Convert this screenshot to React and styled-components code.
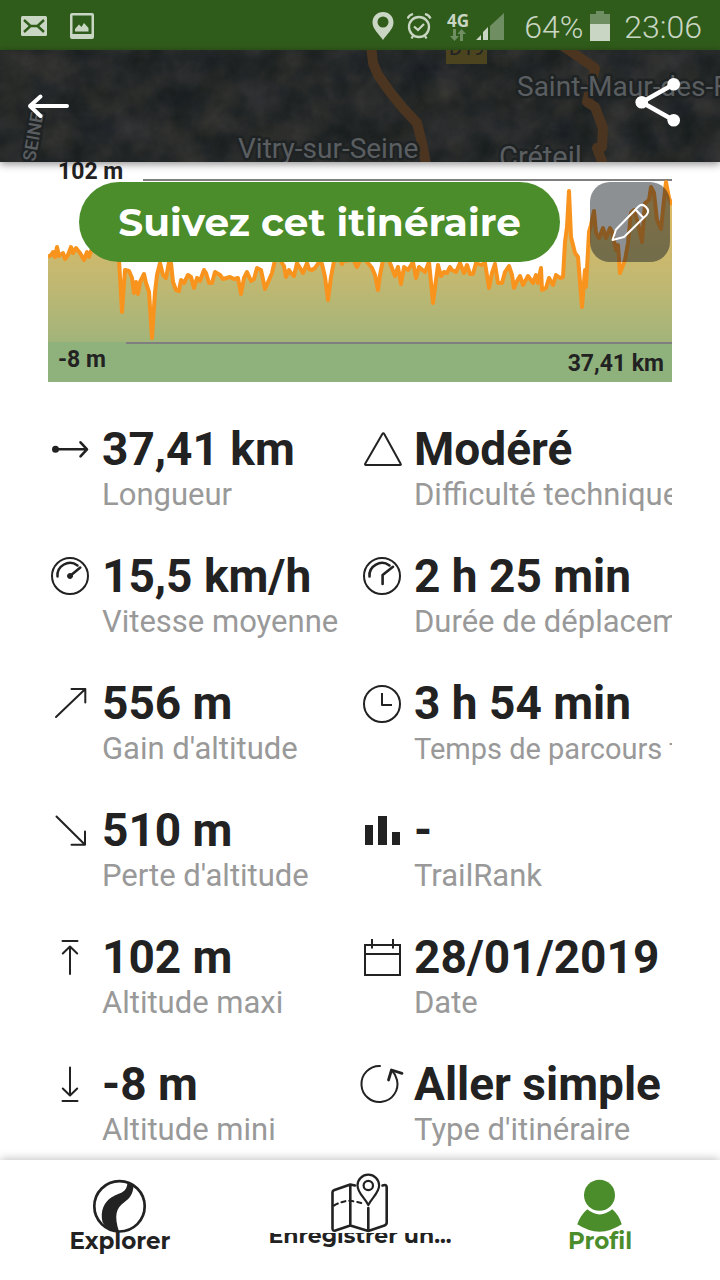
import React from "react";
import styled, { createGlobalStyle } from "styled-components";

const GlobalStyle = createGlobalStyle`
  * {
    box-sizing: border-box;
  }
  body {
    margin: 0;
    background: #fff;
    color: #222;
    font-family: Roboto, "Liberation Sans", sans-serif;
  }
  button {
    margin: 0;
    padding: 0;
    border: 0;
    background: none;
    color: inherit;
    cursor: pointer;
  }
`;

const Page = styled.div`
  display: flex;
  flex-direction: column;
  min-height: 100vh;
`;

const StatusBar = styled.div`
  display: flex;
  align-items: center;
  justify-content: space-between;
  height: 50px;
  padding: 3px 18px 0 20px;
  background: #305c1b;
  color: #c9d6c3;
`;

const StatusGroup = styled.div`
  display: flex;
  align-items: center;
  gap: ${({ $gap }) => $gap}px;
`;

const StatusText = styled.span`
  font-size: 32px;
  line-height: 36px;
  font-weight: 300;
`;

const Network = styled.span`
  display: flex;
  flex-direction: column;
  align-items: center;
  font: 700 17px/16px "Open Sans", sans-serif;
`;

const Header = styled.header`
  position: relative;
  z-index: 2;
  display: flex;
  align-items: center;
  justify-content: space-between;
  height: 112px;
  padding: 0 38px 0 24px;
  background: #272b2b;
  box-shadow: 0 2px 8px rgba(0, 0, 0, 0.45);
`;

const MapBackdrop = styled.svg`
  position: absolute;
  top: 0;
  left: 0;
  width: 100%;
  height: 100%;
  text {
    fill: #5a5e61;
    stroke: #1e2223;
    stroke-width: 5px;
    stroke-linejoin: round;
    paint-order: stroke;
  }
`;

const HeaderButton = styled.button`
  position: relative;
  width: 48px;
  height: 48px;
  color: #fff;
  svg {
    display: block;
    overflow: visible;
  }
`;

const Main = styled.main`
  flex: 1;
  padding: 0 48px 11px;
`;

const Chart = styled.section`
  position: relative;
  height: 220px;
`;

const ChartSvg = styled.svg`
  display: block;
  width: 100%;
  height: 100%;
`;

const ChartLabel = styled.span`
  position: absolute;
  ${({ $place }) => $place};
  font-size: 23px;
  line-height: 26px;
  font-weight: 700;
`;

const ChartActions = styled.div`
  position: absolute;
  top: 20px;
  left: 31px;
  right: 2px;
  display: flex;
  gap: 30px;
`;

const FollowButton = styled.button`
  flex: 1;
  height: 80px;
  border-radius: 40px;
  background: #4b8c2b;
  color: #fff;
  font: 700 39px/48px Montserrat, Inter, sans-serif;
`;

const EditButton = styled.button`
  width: 80px;
  height: 80px;
  border-radius: 20px;
  background: rgba(27, 33, 39, 0.5);
  color: #fff;
  svg {
    display: block;
  }
`;

const Stats = styled.dl`
  display: grid;
  grid-template-columns: 1fr 1fr;
  row-gap: 35px;
  margin: 0;
  padding-top: 40px;
`;

const Stat = styled.div`
  display: grid;
  grid-template-columns: 44px 1fr;
  column-gap: 10px;
  min-width: 0;
  overflow: hidden;
`;

const StatIcon = styled.svg`
  grid-row: 1;
  grid-column: 1;
  align-self: center;
  width: 44px;
  height: 44px;
  fill: none;
  stroke: #222;
  stroke-width: 2;
  stroke-linecap: round;
  stroke-linejoin: round;
`;

const StatValue = styled.dd`
  grid-row: 1;
  grid-column: 2;
  margin: 0;
  font-size: 46px;
  line-height: 54px;
  font-weight: 700;
  white-space: nowrap;
`;

const StatLabel = styled.dt`
  grid-row: 2;
  grid-column: 2;
  color: #999;
  font-size: ${({ $small }) => ($small ? 29 : 31)}px;
  line-height: ${({ $small }) => ($small ? 34 : 38)}px;
  white-space: nowrap;
`;

const BottomNav = styled.nav`
  position: relative;
  z-index: 2;
  display: grid;
  grid-template-columns: repeat(3, 1fr);
  height: 120px;
  background: #fff;
  box-shadow: 0 0 10px rgba(0, 0, 0, 0.3);
`;

const NavItem = styled.a`
  display: flex;
  flex-direction: column;
  align-items: center;
  padding-top: 13px;
  color: ${({ $active }) => ($active ? "#4b8c2b" : "#222")};
  text-decoration: none;
  svg {
    flex: none;
  }
`;

const NavLabel = styled.span`
  overflow: ${({ $tight }) => ($tight ? "hidden" : "visible")};
  padding-bottom: 12px;
  font: 700 ${({ $tight }) => ($tight ? 22 : 23)}px Montserrat, Inter, sans-serif;
  line-height: ${({ $tight }) => ($tight ? 6 : 16)}px;
  white-space: nowrap;
`;

const elevation = `0,95 3,93 5,90 7,95 9,85 11,94 15,91 17,97 20,93 23,85 25,91 28,86 32,91 36,98
39,90 41,95 43,89 50,84 58,88 66,82 71,98 74,150 77,108 81,109 84,116 86,131 88,120 90,132 92,120
96,112 98,121 101,130 104,176 107,130 109,113 112,101 115,113 118,116 121,100 123,101 125,120
128,128 131,129 133,118 136,121 140,113 143,115 146,126 149,116 152,119 156,108 158,111 161,121
164,121 167,110 172,113 175,117 182,115 186,117 190,116 193,132 196,116 199,110 203,119 206,117
209,106 213,108 217,127 221,118 224,111 227,98 230,92 234,101 236,104 238,115 241,108 243,111
246,114 249,101 252,106 255,111 259,101 261,107 264,108 267,106 271,100 274,102 277,115 280,138
283,115 286,99 290,92 294,102 297,94 299,99 304,95 309,105 314,94 320,101 324,106 327,113 330,128
332,113 335,98 339,92 342,101 347,114 350,105 353,122 356,105 360,108 365,100 368,116 371,105
377,110 381,100 385,141 388,118 390,103 393,114 396,110 399,111 402,105 404,108 408,110 412,101
416,111 419,103 422,112 425,112 428,101 433,103 437,101 441,126 444,111 447,102 450,121 454,121
457,110 461,104 464,113 466,126 469,119 472,114 475,123 480,114 485,121 488,113 490,121 493,106
494,128 498,126 501,116 505,123 508,113 512,116 515,115 517,80 519,65 521,29 523,75 527,91 530,95
534,145 537,108 538,125 541,70 543,63 546,49 548,71 551,76 555,66 558,76 562,66 564,70 568,88
570,83 572,111 577,98 580,81 583,51 586,48 590,61 594,80 597,41 601,38 603,25 606,31 609,58
613,67 616,38 618,20 621,36 624,43`;

const icons = {
  length: (
    <g strokeWidth="2.6">
      <circle cx="7.5" cy="22.3" r="2.5" fill="#222" strokeWidth="2" />
      <path d="M8 22.3H38.5M32.5 15.3L39 22.3L32.5 29.3" />
    </g>
  ),
  difficulty: <path d="M22.2 7.2Q23.3 5.5 24.4 7.2L40.5 36.5Q41.5 38 40 38H6Q4.5 38 5.3 36.5Z" />,
  speed: (
    <g>
      <circle cx="22" cy="22" r="18" />
      <path strokeWidth="2.5" d="M9.5 22.5A12.5 12.5 0 0 1 29.5 11.5M22 22L32.3 13.5" />
      <circle cx="22" cy="22" r="2.5" fill="#222" strokeWidth="1" />
    </g>
  ),
  moving: (
    <g>
      <circle cx="22" cy="22" r="18" />
      <path strokeWidth="2.6" d="M9.5 22.5A12.5 12.5 0 0 1 29.5 11.5M22.6 30V21L33 12.8" />
    </g>
  ),
  gain: <path d="M8 36L37.3 8M23.5 8H37.3V21.5" />,
  time: (
    <g strokeLinecap="butt">
      <circle cx="22" cy="22" r="18" />
      <path d="M22 11V23H32" />
    </g>
  ),
  loss: <path d="M8.5 8.5L37 36.7M23.5 36.7H37V23.5" />,
  rank: <path fill="#222" stroke="none" d="M5 17h8v20H5zM18 8h9v29h-9zM32 24h8v13h-8z" />,
  max: <path d="M14.5 6H29.5M22 39V12M14.8 18.5L22 11.5L29.2 18.5" />,
  date: <path strokeLinecap="butt" strokeLinejoin="miter" d="M5 10H40V40H5ZM5 19H40M12 4V13.5M33 4V13.5" />,
  min: <path d="M22 5.5V33M14.8 26.5L22 33.5L29.2 26.5M14.5 39H29.5" />,
  type: (
    <g>
      <path d="M20 4A18 18 0 1 0 37 18Q35.5 12 31.5 8" />
      <path strokeWidth="2.8" d="M28.5 18L31.5 8L42 11.3" />
    </g>
  ),
};

const stats = [
  { icon: "length", value: "37,41 km", label: "Longueur" },
  { icon: "difficulty", value: "Modéré", label: "Difficulté technique" },
  { icon: "speed", value: "15,5 km/h", label: "Vitesse moyenne" },
  { icon: "moving", value: "2 h 25 min", label: "Durée de déplacement" },
  { icon: "gain", value: "556 m", label: "Gain d'altitude" },
  { icon: "time", value: "3 h 54 min", label: "Temps de parcours total", small: true },
  { icon: "loss", value: "510 m", label: "Perte d'altitude" },
  { icon: "rank", value: "-", label: "TrailRank" },
  { icon: "max", value: "102 m", label: "Altitude maxi" },
  { icon: "date", value: "28/01/2019", label: "Date" },
  { icon: "min", value: "-8 m", label: "Altitude mini" },
  { icon: "type", value: "Aller simple", label: "Type d'itinéraire" },
];

function SystemStatus() {
  return (
    <StatusBar>
      <StatusGroup $gap={22}>
        <svg width="28" height="28" viewBox="0 0 28 28">
          <rect x="1" y="3" width="26" height="20" rx="1.5" fill="#c9d6c3" />
          <path d="M4 7L10.5 13H17.5L24 7M4 19L10.5 13M24 19L17.5 13" fill="none" stroke="#305c1b" strokeWidth="2.4" />
        </svg>
        <svg width="24" height="28" viewBox="0 0 24 28">
          <path fillRule="evenodd" fill="#c9d6c3" d="M2 0H22Q24 0 24 2V24Q24 26 22 26H2Q0 26 0 24V2Q0 0 2 0ZM2.5 2.5V21H21.5V2.5Z" />
          <path fill="#c9d6c3" d="M5 18.5V16L9 11.5L11.5 14L14 10L18.5 15V18.5Z" />
        </svg>
      </StatusGroup>
      <StatusGroup $gap={14}>
        <StatusGroup $gap={13}>
          <svg width="22" height="30" viewBox="0 0 22 30">
            <path
              fillRule="evenodd"
              fill="#c9d6c3"
              d="M11 0C5 0 .5 4.5 .5 10.5C.5 17 7 22 11 28C15 22 21.5 17 21.5 10.5C21.5 4.5 17 0 11 0ZM11 4.5A5.5 5.5 0 1 1 11 15.5A5.5 5.5 0 1 1 11 4.5Z"
            />
          </svg>
          <svg width="26" height="28" viewBox="0 0 26 28" fill="none" stroke="#c9d6c3" strokeWidth="2.3">
            <circle cx="12" cy="14" r="10" />
            <path d="M.5 5.5Q2 2 6 1M23.5 5.5Q22 2 18 1M7 13.5L11 17L17 11M6 23L4.5 25.5M18 23L19.5 25.5" />
          </svg>
        </StatusGroup>
        <StatusGroup $gap={20}>
          <StatusGroup $gap={7}>
            <Network>
              4G
              <svg width="16" height="12" viewBox="0 0 16 12" fill="#6f8f62">
                <path d="M3 0H6V7H9L4.5 12L0 7H3ZM10 12V5H7.5L11.5 0L16 5H13V12Z" />
              </svg>
            </Network>
            <svg width="28" height="28" viewBox="0 0 28 28">
              <path fill="#c9d6c3" d="M0 27L5 22V27ZM7 27V19L12 14V27Z" />
              <path fill="#6f8f62" d="M14 27V13L28 0V27Z" />
            </svg>
          </StatusGroup>
          <StatusGroup $gap={7}>
            <StatusText>64%</StatusText>
            <svg width="20" height="32" viewBox="0 0 20 32">
              <path fill="#6f8f62" d="M6 0H14V3H20V13H0V3H6Z" />
              <path fill="#c9d6c3" d="M0 13H20V30H0Z" />
            </svg>
          </StatusGroup>
        </StatusGroup>
        <StatusText>23:06</StatusText>
      </StatusGroup>
    </StatusBar>
  );
}

function MapHeader() {
  return (
    <Header>
      <MapBackdrop viewBox="0 0 720 112" preserveAspectRatio="xMidYMid slice" aria-hidden="true">
        <defs>
          <filter id="terrain" x="0" y="0" width="100%" height="100%" colorInterpolationFilters="sRGB">
            <feTurbulence type="fractalNoise" baseFrequency="0.03" numOctaves="6" seed="8" />
            <feColorMatrix values="0.16 0.04 0 0 0.05  0.13 0.03 0 0 0.08  0.12 0 0.03 0 0.085  0 0 0 0 1" />
          </filter>
        </defs>
        <rect width="720" height="112" filter="url(#terrain)" />
        <g fill="none" stroke="#4b3520" strokeWidth="10" strokeLinejoin="round">
          <path d="M371 -4L373 13L378 25L390 42L403 58L417 73L422 93L426 114" />
          <path d="M560 -6L595 18L592 33L587 52L595 57L603 78L602 97L597 98L603 114" />
        </g>
        <rect x="446" y="-10" width="41" height="24" fill="#4c431f" />
        <text x="449" y="5" fontSize="20" style={{ fill: "#1e2223", stroke: "none" }}>D19</text>
        <text x="238" y="108" fontSize="28">Vitry-sur-Seine</text>
        <text x="517" y="46" fontSize="28">Saint-Maur-des-Fossés</text>
        <text x="499" y="117" fontSize="29">Créteil</text>
        <text x="34" y="118" fontSize="18" fontWeight="500" transform="rotate(-80 34 118)">-SEINE</text>
      </MapBackdrop>
      <HeaderButton type="button" aria-label="Retour">
        <svg width="48" height="48" viewBox="0 0 48 48" fill="none" stroke="currentColor" strokeWidth="4" strokeLinecap="round" strokeLinejoin="round">
          <path d="M6 24H43M16.5 14.5L6 24L16.5 34" />
        </svg>
      </HeaderButton>
      <HeaderButton type="button" aria-label="Partager">
        <svg width="48" height="48" viewBox="0 0 48 48" fill="currentColor" stroke="currentColor">
          <path fill="none" strokeWidth="4.5" d="M39.7 2.3L7.7 20.3L39.7 38.3" />
          <circle cx="7.7" cy="20.3" r="6.3" stroke="none" />
          <circle cx="39.7" cy="2.3" r="6.3" stroke="none" />
          <circle cx="39.7" cy="38.3" r="6.3" stroke="none" />
        </svg>
      </HeaderButton>
    </Header>
  );
}

function ElevationChart() {
  return (
    <Chart>
      <ChartSvg viewBox="0 0 624 220" preserveAspectRatio="none" aria-hidden="true">
        <defs>
          <linearGradient id="ground" gradientUnits="userSpaceOnUse" x1="0" y1="18" x2="0" y2="184">
            <stop offset="0" stopColor="#e8bb62" />
            <stop offset="0.6" stopColor="#c2b871" />
            <stop offset="1" stopColor="#a0b47b" />
          </linearGradient>
        </defs>
        <polygon points={`0,180 ${elevation} 624,180`} fill="url(#ground)" />
        <rect y="180" width="624" height="40" fill="#8fb27d" />
        <path d="M95 18H624M78 181H624" stroke="#7f7f7f" strokeWidth="2" />
        <polyline points={elevation} fill="none" stroke="#f8931d" strokeWidth="4" strokeLinejoin="round" />
      </ChartSvg>
      <ChartLabel $place="top: -3px; left: 10px">102 m</ChartLabel>
      <ChartLabel $place="bottom: 9px; left: 10px">-8 m</ChartLabel>
      <ChartLabel $place="bottom: 5px; right: 8px">37,41 km</ChartLabel>
      <ChartActions>
        <FollowButton type="button">Suivez cet itinéraire</FollowButton>
        <EditButton type="button" aria-label="Modifier">
          <svg width="80" height="80" viewBox="0 0 80 80" fill="none" stroke="currentColor" strokeWidth="2" strokeLinejoin="round">
            <path d="M22.5 58L26 47.5L48.5 24.5Q52 21 56 25Q60 29 56.5 33L34 55ZM45.5 27.5L53.5 36" />
          </svg>
        </EditButton>
      </ChartActions>
    </Chart>
  );
}

function Navigation() {
  return (
    <BottomNav>
      <NavItem href="#explorer">
        <svg width="60" height="60" viewBox="0 0 60 60">
          <circle cx="29.5" cy="33.3" r="25.2" fill="none" stroke="#222" strokeWidth="2.7" />
          <path fill="#222" d="M37.5 9L43.5 13C43 21 40 25 34 29.5C26 35 24 43 29 58.5C22 58 15 55 12.5 49C10 38 14 29 22 24C31 19 37 20 37.5 9Z" />
        </svg>
        <NavLabel>Explorer</NavLabel>
      </NavItem>
      <NavItem href="#record">
        <svg width="60" height="60" viewBox="0 0 60 60" fill="none" stroke="#222" strokeWidth="2.6" strokeLinecap="round" strokeLinejoin="round">
          <path d="M25 12.5L20.3 11.5L4.5 17Q2.5 17.7 2.5 19V55.5Q2.5 58.5 5.5 57.5L20.3 52.5L38.3 58L54.5 52.5Q56.7 51.7 56.7 49.5V14.5Q56.7 11 52.5 12.5M20.3 12V52.5M38.3 35V58" />
          <path strokeWidth="2.2" strokeDasharray="4 4" d="M4 32.5Q14 27 22 28Q28 29 33 30.5" />
          <path strokeWidth="2.2" d="M38.3 32C35 25 27.5 20 27.5 12.5A10.8 10.8 0 0 1 49.1 12.5C49.1 20 41.5 25 38.3 32Z" />
          <circle cx="38.3" cy="12.5" r="4.7" strokeWidth="2.2" />
        </svg>
        <NavLabel $tight>Enregistrer un...</NavLabel>
      </NavItem>
      <NavItem href="#profil" $active>
        <svg width="60" height="60" viewBox="0 0 60 60" fill="#4b8c2b">
          <circle cx="29.5" cy="22.3" r="15.5" />
          <path d="M17.3 36.3Q29.7 46.5 42.3 36.3Q49 42 51.7 51.3Q29.5 66 7.3 51.3Q10.5 42 17.3 36.3Z" />
        </svg>
        <NavLabel>Profil</NavLabel>
      </NavItem>
    </BottomNav>
  );
}

function App() {
  return (
    <Page>
      <GlobalStyle />
      <SystemStatus />
      <MapHeader />
      <Main>
        <ElevationChart />
        <Stats>
          {stats.map(({ icon, value, label, small }) => (
            <Stat key={icon}>
              <StatIcon viewBox="0 0 44 44" aria-hidden="true">{icons[icon]}</StatIcon>
              <StatLabel $small={small}>{label}</StatLabel>
              <StatValue>{value}</StatValue>
            </Stat>
          ))}
        </Stats>
      </Main>
      <Navigation />
    </Page>
  );
}

export default App;
